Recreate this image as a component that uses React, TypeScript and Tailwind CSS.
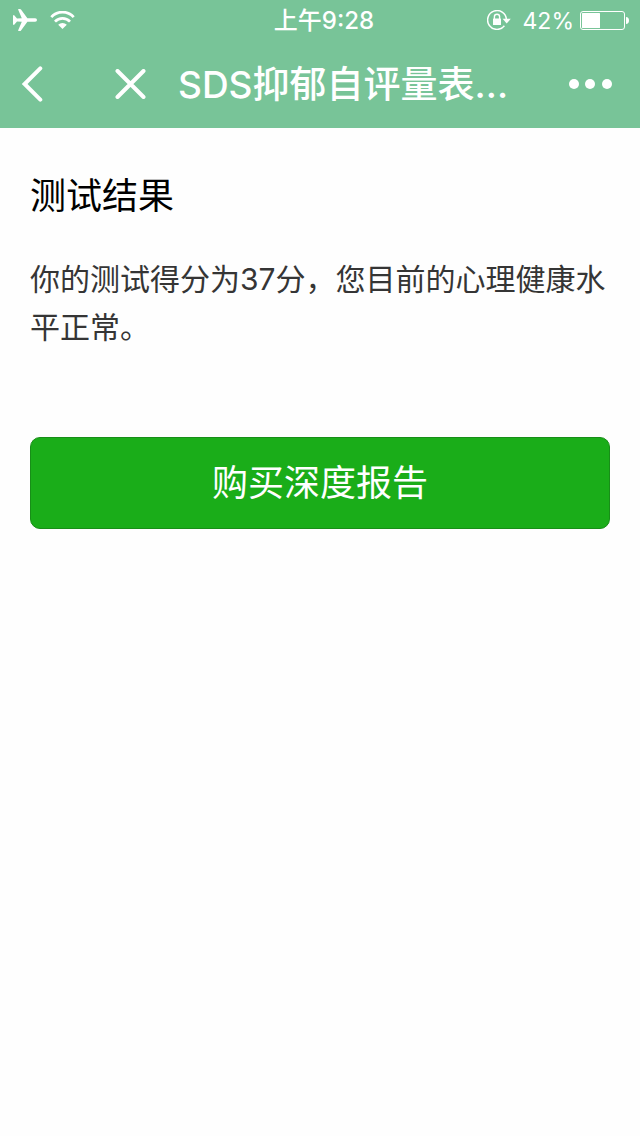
function AirplaneIcon() {
  return (
    <svg width="24" height="22" viewBox="0 0 24 22" fill="white" aria-hidden="true">
      <path d="M22.2 9.2H14.4L8 .5Q7.6 0 7 0H5.6Q4.9 0 5.2.7L8.8 9.2 4 9.6 1.2 6.2H0V15.8H1.2L4 12.4 8.8 12.8 5.2 21.3Q4.9 22 5.6 22H7Q7.6 22 8 21.5L14.4 12.8H22.2Q24 12.6 24 11T22.2 9.2Z" />
    </svg>
  );
}

function WifiIcon() {
  return (
    <svg width="25" height="18" viewBox="0 0 25 18" fill="none" aria-hidden="true">
      <path d="M1.3 6.1A15 15 0 0 1 23.7 6.1" stroke="white" strokeWidth="2.7" />
      <path d="M5 10.6A10.4 10.4 0 0 1 20 10.6" stroke="white" strokeWidth="2.7" />
      <path d="M8.2 13.8A6 6 0 0 1 16.8 13.8L12.5 18Z" fill="white" />
    </svg>
  );
}

function RotationLockIcon() {
  return (
    <svg width="24" height="20" viewBox="0 0 24 20" fill="none" aria-hidden="true">
      <path
        d="M17.4 15.8A9.4 9.4 0 1 1 19.4 9.4"
        stroke="white"
        strokeWidth="1.5"
      />
      <path d="M15.6 8.8H23.8L19.7 13.4Z" fill="white" />
      <rect x="6" y="8.5" width="8" height="6.5" rx=".5" fill="white" />
      <path d="M7.4 9V6.8a2.6 2.6 0 0 1 5.2 0V9" stroke="white" strokeWidth="1.4" />
    </svg>
  );
}

function BatteryIcon() {
  return (
    <svg width="49" height="19" viewBox="0 0 49 19" fill="none" aria-hidden="true">
      <rect x=".5" y=".5" width="44" height="18" rx="2.5" stroke="white" />
      <rect x="2" y="2" width="18" height="15" rx=".5" fill="white" />
      <path d="M46 6Q49 6.4 49 9.5T46 13Z" fill="white" />
    </svg>
  );
}

function StatusBar() {
  return (
    <div className="grid h-10 grid-cols-[1fr_auto_1fr] items-center text-2xl leading-9">
      <div className="flex items-center gap-[13px] pl-[13px]">
        <AirplaneIcon />
        <WifiIcon />
      </div>
      <time className="pt-0.5 pl-2 font-medium">上午9:28</time>
      <div className="flex items-center justify-end pr-[11px]">
        <RotationLockIcon />
        <span className="pt-0.5 pr-1.5 pl-3 text-[23px]">42%</span>
        <BatteryIcon />
      </div>
    </div>
  );
}

function NavBar() {
  return (
    <nav className="flex h-22 items-center">
      <button type="button" aria-label="返回" className="pl-[21px]">
        <svg width="22" height="36" viewBox="0 0 22 36" fill="none">
          <path
            d="M19.3 2.3 3.6 18l15.7 15.7"
            stroke="white"
            strokeWidth="4"
            strokeLinecap="round"
          />
        </svg>
      </button>
      <button type="button" aria-label="关闭" className="pl-[72px]">
        <svg width="31" height="30" viewBox="0 0 31 30" fill="none">
          <path
            d="M2.5 2 28.5 28M28.5 2 2.5 28"
            stroke="white"
            strokeWidth="4"
            strokeLinecap="round"
          />
        </svg>
      </button>
      <h1 className="min-w-0 flex-1 pt-0.5 pl-8 text-[37px] leading-[44px] font-medium whitespace-nowrap">
        SDS抑郁自评量表…
      </h1>
      <button type="button" aria-label="更多" className="pr-7">
        <svg width="43" height="10" viewBox="0 0 43 10" fill="white">
          <circle cx="5" cy="5" r="5" />
          <circle cx="21" cy="5" r="5" />
          <circle cx="38" cy="5" r="5" />
        </svg>
      </button>
    </nav>
  );
}

function App() {
  return (
    <div
      lang="zh-CN"
      className="min-h-screen bg-[#fefefe] font-[Inter,'Noto_Sans_CJK_SC',sans-serif]"
    >
      <header className="bg-[#78c498] text-white">
        <StatusBar />
        <NavBar />
      </header>
      <main className="px-[30px] pt-[41px]">
        <h2 className="text-4xl leading-[54px] text-black">测试结果</h2>
        <p className="pt-8 text-3xl leading-12 text-[#353535]">
          你的测试得分为37分，您目前的心理健康水平正常。
        </p>
        <button
          type="button"
          className="mt-[86px] h-[92px] w-full rounded-[10px] border border-[#188e18] bg-[#1aad19] text-4xl text-white"
        >
          购买深度报告
        </button>
      </main>
    </div>
  );
}

export default App;
